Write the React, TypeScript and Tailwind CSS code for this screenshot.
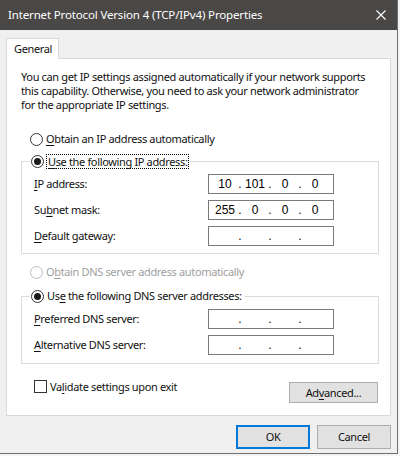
import React, { Fragment } from "react";

function U({ c }: { c: string }) {
  return <span className="underline decoration-1 underline-offset-[2px]">{c}</span>;
}

function Radio({ checked, disabled }: { checked?: boolean; disabled?: boolean }) {
  return (
    <span
      className={`flex h-[13px] w-[13px] shrink-0 items-center justify-center rounded-full border bg-white ${
        disabled ? "border-[#bcbcbc]" : "border-[#333333]"
      }`}
    >
      {checked && <span className="h-[7px] w-[7px] rounded-full bg-[#1a1a1a]" />}
    </span>
  );
}

function IpBox({ v }: { v?: string[] }) {
  const parts = v ?? ["", "", "", ""];
  return (
    <div className="flex h-[20px] w-[126px] items-center border border-[#7a7a7a] bg-white pl-[4px] font-['Liberation_Sans',sans-serif] text-[12px] leading-none tracking-normal text-black">
      {parts.map((p, i) => (
        <Fragment key={i}>
          <span className="w-[24px] text-center">{p}</span>
          {i < 3 && <span className="w-[6px] text-center">.</span>}
        </Fragment>
      ))}
    </div>
  );
}

function Row({ label, v }: { label: React.ReactNode; v?: string[] }) {
  return (
    <div className="flex h-[20px] items-center">
      <div className="w-[186px] pl-[12px]">{label}</div>
      <IpBox v={v} />
    </div>
  );
}

export default function App() {
  return (
    <div className="h-[456px] w-[400px] whitespace-nowrap bg-[#f4f4f4] font-['Noto_Sans',sans-serif] text-[11px] leading-[14px] tracking-[-0.35px] text-[#111111]">
      <div className="flex h-[454px] w-[398px] flex-col border-b border-r border-[#6e6e6e] bg-[#f0f0f0]">
        {/* title bar */}
        <div className="flex h-[30px] shrink-0 items-center justify-between bg-[#4a4846] pl-[8px] pr-[11px] text-[11.5px] tracking-[-0.15px] text-white">
          <span className="leading-none">Internet Protocol Version 4 (TCP/IPv4) Properties</span>
          <svg width="10" height="10" viewBox="0 0 10 10" className="mt-[-1px]">
            <path d="M0.5 0.5 L9.5 9.5 M9.5 0.5 L0.5 9.5" stroke="white" strokeWidth="1.1" />
          </svg>
        </div>

        {/* tab strip */}
        <div className="flex h-[28px] shrink-0 items-end pl-[6px]">
          <div className="relative z-10 mb-[-1px] flex h-[21px] w-[53px] items-center border-x border-t border-[#d9d9d9] bg-white pl-[7px]">
            General
          </div>
        </div>

        {/* panel */}
        <div className="ml-[6px] flex h-[358px] w-[385px] shrink-0 flex-col border border-[#d9d9d9] bg-white">
          <p className="mt-[11px] h-[42px] pl-[14px] leading-[14px]">
            You can get IP settings assigned automatically if your network supports
            <br />
            this capability. Otherwise, you need to ask your network administrator
            <br />
            for the appropriate IP settings.
          </p>

          <div className="mt-[19px] flex h-[16px] items-center gap-[3px] pl-[23px]">
            <Radio />
            <span>
              <U c="O" />
              btain an IP address automatically
            </span>
          </div>

          {/* IP group */}
          <div className="relative ml-[14px] mt-[14px] w-[358px] border border-[#dcdcdc] pb-[7px] pt-[12px]">
            <div className="absolute left-[8px] top-[-9px] flex h-[16px] items-center gap-[2px] bg-white pl-[1px] pr-[1px]">
              <Radio checked />
              <span className="border border-dotted border-black px-[1px] leading-[13px]">
                <U c="U" />
                se the following IP address:
              </span>
            </div>
            <div className="flex flex-col gap-[6px]">
              <Row label={<><U c="I" />P address:</>} v={["10", "101", "0", "0"]} />
              <Row label={<>Su<U c="b" />net mask:</>} v={["255", "0", "0", "0"]} />
              <Row label={<><U c="D" />efault gateway:</>} />
            </div>
          </div>

          <div className="mt-[10px] flex h-[16px] items-center gap-[3px] pl-[23px] text-[#a0a0a0]">
            <Radio disabled />
            <span>
              O<U c="b" />tain DNS server address automatically
            </span>
          </div>

          {/* DNS group */}
          <div className="relative ml-[14px] mt-[16px] w-[358px] border border-[#dcdcdc] pb-[8px] pt-[12px]">
            <div className="absolute left-[8px] top-[-9px] flex h-[16px] items-center gap-[3px] bg-white pl-[1px] pr-[2px]">
              <Radio checked />
              <span>
                Us<U c="e" /> the following DNS server addresses:
              </span>
            </div>
            <div className="flex flex-col gap-[6px]">
              <Row label={<><U c="P" />referred DNS server:</>} />
              <Row label={<><U c="A" />lternative DNS server:</>} />
            </div>
          </div>

          <div className="mt-[16px] flex items-start justify-between pl-[27px] pr-[12px]">
            <div className="flex h-[13px] items-center gap-[3px]">
              <span className="h-[13px] w-[13px] border border-[#333333] bg-white" />
              <span>
                Va<U c="l" />idate settings upon exit
              </span>
            </div>
            <button className="mt-[2px] flex h-[21px] w-[89px] items-center justify-center border border-[#adadad] bg-[#e1e1e1]">
              Ad<U c="v" />anced...
            </button>
          </div>
        </div>

        {/* buttons */}
        <div className="mt-[9px] flex justify-end gap-[7px] pr-[6px]">
          <button className="flex h-[24px] w-[74px] items-center justify-center border-2 border-[#0078d7] bg-[#e1e1e1]">
            OK
          </button>
          <button className="flex h-[24px] w-[74px] items-center justify-center border border-[#adadad] bg-[#e1e1e1]">
            Cancel
          </button>
        </div>
      </div>
    </div>
  );
}
